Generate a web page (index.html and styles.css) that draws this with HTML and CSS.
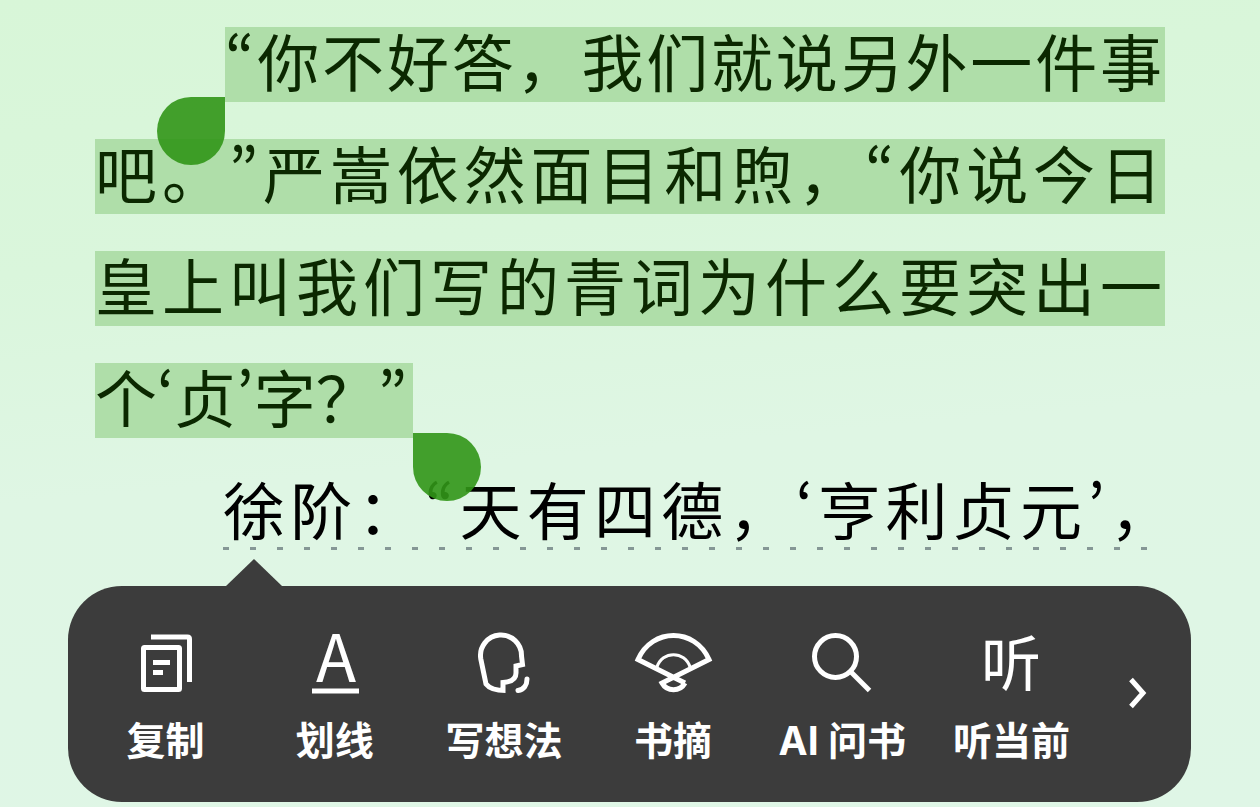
FILE: index.html
```html
<!DOCTYPE html>
<html lang="zh-CN">
<head>
<meta charset="UTF-8">
<meta name="viewport" content="width=device-width, initial-scale=1.0">
<title>阅读</title>
<link rel="stylesheet" href="styles.css">
</head>
<body>
<main class="passage">
  <p class="line indent"><mark class="selected"><span class="quote">“</span>你不好答，我们就说另外一件事<span class="handle start"></span></mark></p>
  <p class="line"><mark class="selected">吧。<span class="quote">”</span>严嵩依然面目和煦，<span class="quote">“</span>你说今日</mark></p>
  <p class="line"><mark class="selected">皇上叫我们写的青词为什么要突出一</mark></p>
  <p class="line last"><mark class="selected">个<span class="quote">‘</span>贞<span class="quote">’</span>字？<span class="quote">”</span><span class="handle end"></span></mark></p>
  <p class="line indent noted"><span class="text">徐阶：<span class="quote">“</span>天有四德，<span class="quote">‘</span>亨利贞元<span class="quote">’</span>，</span></p>
</main>

<div class="toolbar" role="toolbar" aria-label="选中文字">
  <button class="action" type="button">
    <svg class="icon" viewBox="0 0 80 64" aria-hidden="true">
      <rect x="17.5" y="16.5" width="36" height="42" rx="1"/>
      <path d="M25 6H61.5Q63.5 6 63.5 8V51M27 31.5H44M27 41.5H37"/>
    </svg>
    <span class="label">复制</span>
  </button>
  <button class="action" type="button">
    <svg class="icon" viewBox="0 0 80 64" aria-hidden="true">
      <text class="glyph letter" x="41" y="51">A</text>
      <path d="M17 60H64"/>
    </svg>
    <span class="label">划线</span>
  </button>
  <button class="action" type="button">
    <svg class="icon" viewBox="0 0 80 64" aria-hidden="true">
      <path d="M39 59.5V51.5C47 51 52 48 52 42V35L58.5 33.5L57.5 25A20.5 20.5 0 1 0 16.8 28L22 53C25 57 31 59.5 41.5 59.5"/>
      <path class="round" d="M63 48C63 54 60 58.5 54 59.5"/>
    </svg>
    <span class="label">写想法</span>
  </button>
  <button class="action" type="button">
    <svg class="icon" viewBox="0 0 80 64" aria-hidden="true">
      <path d="M52 52L5 28.5C19 -3.5 62 -3.5 76 28.5L29 52C34 61 47 61 52 52"/>
      <path class="thin" d="M24 36C29 19.5 52 19.5 57 36"/>
    </svg>
    <span class="label">书摘</span>
  </button>
  <button class="action" type="button">
    <svg class="icon" viewBox="0 0 80 64" aria-hidden="true">
      <circle cx="33.5" cy="25.5" r="21"/>
      <path d="M49 41L67.5 59.5"/>
    </svg>
    <span class="label">AI 问书</span>
  </button>
  <button class="action" type="button">
    <svg class="icon" viewBox="0 0 80 64" aria-hidden="true">
      <text class="glyph" x="40" y="55">听</text>
    </svg>
    <span class="label">听当前</span>
  </button>
  <button class="next" type="button" aria-label="更多">
    <svg class="chevron" viewBox="0 0 20 32" aria-hidden="true">
      <path d="M3 2.5L15 16L3 29.5"/>
    </svg>
  </button>
</div>
</body>
</html>
```
FILE: styles.css
```css
* {
  box-sizing: border-box;
}

body {
  margin: 0;
  min-height: 100vh;
  background: linear-gradient(175deg, #d8f6d8 0%, #daf6dc 30%, #dff6e4 55%, #dff6e6 100%);
  font-family: "Noto Sans CJK SC", sans-serif;
  overflow-x: hidden;
}

.passage {
  padding: 27px 95px 0;
  font-size: 62px;
  color: #000;
}

.line {
  display: flex;
  margin: 0 0 37px;
  line-height: 67px;
  white-space: nowrap;
  text-spacing-trim: space-all;
}

.indent {
  padding-left: 130px;
}

.selected,
.text {
  position: relative;
  flex: 1;
  padding: 0 3px 8px 0;
  text-align: justify;
  text-align-last: justify;
}

.selected {
  background: #afdea9;
  color: #0b2800;
}

.last .selected {
  flex: none;
  padding-right: 6px;
}

.quote {
  font-variant-east-asian: proportional-width;
}

.noted {
  margin: 0 -10px 0 0;
  padding-left: 128px;
}

.noted .text {
  background: repeating-linear-gradient(90deg, #859795 0 6px, transparent 6px 27px) left bottom / calc(100% - 20px) 3px no-repeat;
}

.handle {
  position: absolute;
  top: 70px;
  z-index: 1;
  width: 68px;
  height: 68px;
  background: rgba(49, 150, 23, 0.9);
}

.start {
  right: 100%;
  border-radius: 34px 0 34px 34px;
}

.end {
  left: 100%;
  border-radius: 0 34px 34px 34px;
}

.toolbar {
  position: relative;
  display: flex;
  margin: 36px 69px 5px 68px;
  padding: 0 11px 0 13px;
  height: 216px;
  border-radius: 54px;
  background: #3c3c3c;
}

/* pointer towards the selected text */
.toolbar::before {
  content: '';
  position: absolute;
  left: 158px;
  bottom: 100%;
  border: 28px solid transparent;
  border-top: 0;
  border-bottom: 27px solid #3c3c3c;
}

.action,
.next {
  padding: 0;
  border: 0;
  background: none;
  color: #fff;
  font-family: Inter, "Noto Sans CJK SC", sans-serif;
  cursor: pointer;
}

.action {
  flex: 1;
  display: flex;
  flex-direction: column;
  align-items: center;
  padding-top: 45px;
}

.icon,
.chevron {
  fill: none;
  stroke: #fff;
  stroke-width: 5;
  overflow: visible;
}

.icon {
  width: 80px;
  height: 64px;
}

.thin {
  stroke-width: 3;
}

.round {
  stroke-linecap: round;
}

.glyph {
  fill: #fff;
  stroke: none;
  font-family: "Noto Sans CJK SC", sans-serif;
  font-size: 60px;
  font-weight: 400;
  text-anchor: middle;
}

.letter {
  font-size: 66px;
}

.label {
  margin-top: 22px;
  font-size: 39px;
  font-weight: 700;
  line-height: 48px;
  white-space: nowrap;
}

.next {
  width: 84px;
}

.chevron {
  width: 20px;
  height: 32px;
}
```
